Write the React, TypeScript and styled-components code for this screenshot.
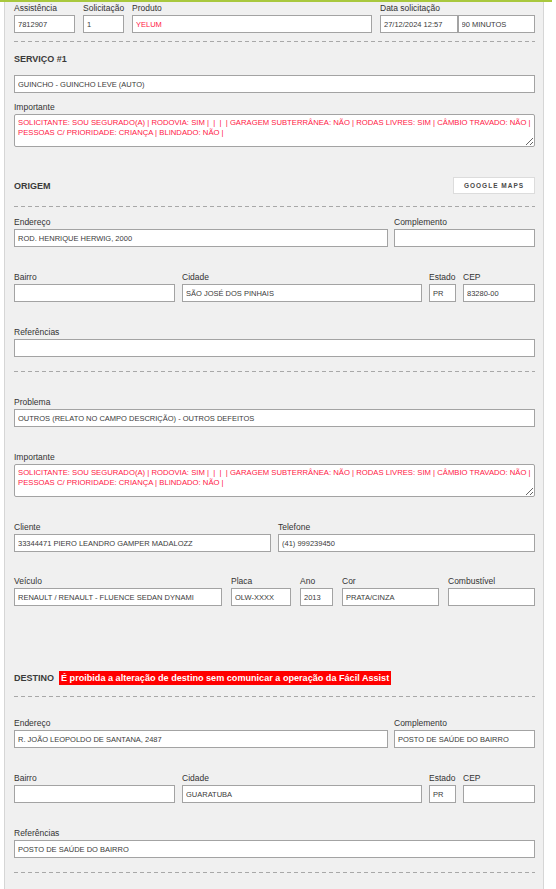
import React from "react";
import styled, {createGlobalStyle} from "styled-components";

const GlobalStyle = createGlobalStyle`
    html, body {
        margin: 0;
        padding: 0;
        background: #ffffff;
        font-family: "Liberation Sans", Arial, sans-serif;
    }
`;

const Page = styled.div`
    width: 552px;
    border-top: 2px solid #a9c83e;
`;

const Panel = styled.div`
    box-sizing: border-box;
    margin-left: 4px;
    width: 540px;
    min-height: 887px;
    padding: 2px 8px 20px 9px;
    background: #f0f0f0;
    border-left: 1px solid #d6d6d6;
    border-right: 1px solid #d6d6d6;
`;

const Row = styled.div<{ $gap?: number; $mt?: number }>`
    display: flex;
    gap: ${(p) => p.$gap ?? 7}px;
    margin-top: ${(p) => p.$mt ?? 0}px;
`;

const Field = styled.div<{ $w?: number }>`
    display: flex;
    flex-direction: column;
    min-width: 0;
    ${(p) => (p.$w ? `width: ${p.$w}px; flex: none;` : "flex: 1;")}
`;

const Label = styled.label`
    display: block;
    height: 11px;
    line-height: 9px;
    font-size: 8.5px;
    color: #333333;
    white-space: nowrap;
`;

const Input = styled.input<{ $red?: boolean }>`
    box-sizing: border-box;
    width: 100%;
    height: 18px;
    margin: 0;
    padding: 0 3px;
    border: 1px solid #a3a3a3;
    border-radius: 0;
    background: #ffffff;
    font-family: "Liberation Sans", Arial, sans-serif;
    font-size: 7.5px;
    color: ${(p) => (p.$red ? "#ff1744" : "#3a3a3a")};
    outline: none;
`;

const Pair = styled.div`
    display: flex;
`;

const Note = styled.textarea`
    box-sizing: border-box;
    display: block;
    width: 100%;
    height: 33px;
    margin: 0;
    padding: 3px 3px;
    border: 1px solid #a3a3a3;
    border-radius: 2px;
    background: #ffffff;
    font-family: "Liberation Sans", Arial, sans-serif;
    font-size: 7.7px;
    line-height: 10px;
    color: #ff1744;
    white-space: pre;
    overflow: hidden;
    resize: both;
    outline: none;
`;

const Divider = styled.div<{ $mt: number }>`
    height: 1px;
    margin-top: ${(p) => p.$mt}px;
    background: repeating-linear-gradient(to right, #a8a8a8 0 4px, transparent 4px 7px);
`;

const SectionHead = styled.div<{ $mt: number }>`
    display: flex;
    align-items: center;
    justify-content: space-between;
    height: 17px;
    margin-top: ${(p) => p.$mt}px;
`;

const TitleGroup = styled.div`
    display: flex;
    align-items: center;
    gap: 5px;
`;

const Title = styled.span`
    font-size: 9px;
    font-weight: bold;
    color: #3a3a3a;
`;

const Warning = styled.span`
    display: inline-block;
    height: 14px;
    line-height: 14px;
    padding: 0 2px;
    background: #ff0000;
    color: #ffffff;
    font-size: 9.1px;
    font-weight: bold;
`;

const MapsButton = styled.button`
    box-sizing: border-box;
    width: 82px;
    height: 17px;
    padding: 0;
    border: 1px solid #dcdcdc;
    background: #ffffff;
    font-family: "Liberation Sans", Arial, sans-serif;
    font-size: 6.5px;
    font-weight: bold;
    letter-spacing: 1px;
    color: #4a4a4a;
    cursor: pointer;
`;

const IMPORTANTE =
    "SOLICITANTE: SOU SEGURADO(A) | RODOVIA: SIM |  |  |  | GARAGEM SUBTERRÂNEA: NÃO | RODAS LIVRES: SIM | CÂMBIO TRAVADO: NÃO |\nPESSOAS C/ PRIORIDADE: CRIANÇA | BLINDADO: NÃO |";

type AddressProps = {
    mt: number;
    endereco: string;
    complemento: string;
    cidade: string;
    cep: string;
    referencias: string;
};

const AddressBlock: React.FC<AddressProps> = ({mt, endereco, complemento, cidade, cep, referencias}) => (
    <>
        <Row $gap={6} $mt={mt}>
            <Field $w={374}>
                <Label>Endereço</Label>
                <Input readOnly value={endereco}/>
            </Field>
            <Field>
                <Label>Complemento</Label>
                <Input readOnly value={complemento}/>
            </Field>
        </Row>
        <Row $gap={7} $mt={26}>
            <Field $w={161}>
                <Label>Bairro</Label>
                <Input readOnly value=""/>
            </Field>
            <Field $w={240}>
                <Label>Cidade</Label>
                <Input readOnly value={cidade}/>
            </Field>
            <Field $w={27}>
                <Label>Estado</Label>
                <Input readOnly value="PR"/>
            </Field>
            <Field>
                <Label>CEP</Label>
                <Input readOnly value={cep}/>
            </Field>
        </Row>
        <Row $mt={26}>
            <Field>
                <Label>Referências</Label>
                <Input readOnly value={referencias}/>
            </Field>
        </Row>
    </>
);

const App: React.FC = () => {
    return (
        <>
            <GlobalStyle/>
            <Page>
                <Panel>
                    <Row $gap={8}>
                        <Field $w={61}>
                            <Label>Assistência</Label>
                            <Input readOnly value="7812907"/>
                        </Field>
                        <Field $w={41}>
                            <Label>Solicitação</Label>
                            <Input readOnly value="1"/>
                        </Field>
                        <Field $w={240}>
                            <Label>Produto</Label>
                            <Input readOnly $red value="YELUM"/>
                        </Field>
                        <Field>
                            <Label>Data solicitação</Label>
                            <Pair>
                                <Input readOnly value="27/12/2024 12:57"/>
                                <Input readOnly value="90 MINUTOS"/>
                            </Pair>
                        </Field>
                    </Row>

                    <Divider $mt={8}/>

                    <SectionHead $mt={8}>
                        <Title>SERVIÇO #1</Title>
                    </SectionHead>
                    <Row $mt={8}>
                        <Field>
                            <Input readOnly value="GUINCHO - GUINCHO LEVE (AUTO)"/>
                        </Field>
                    </Row>
                    <Row $mt={10}>
                        <Field>
                            <Label>Importante</Label>
                            <Note readOnly defaultValue={IMPORTANTE}/>
                        </Field>
                    </Row>

                    <SectionHead $mt={30}>
                        <Title>ORIGEM</Title>
                        <MapsButton>GOOGLE MAPS</MapsButton>
                    </SectionHead>
                    <Divider $mt={12}/>

                    <AddressBlock mt={11}
                                  endereco="ROD. HENRIQUE HERWIG, 2000"
                                  complemento=""
                                  cidade="SÃO JOSÉ DOS PINHAIS"
                                  cep="83280-00"
                                  referencias=""/>

                    <Divider $mt={14}/>

                    <Row $mt={26}>
                        <Field>
                            <Label>Problema</Label>
                            <Input readOnly value="OUTROS (RELATO NO CAMPO DESCRIÇÃO) - OUTROS DEFEITOS"/>
                        </Field>
                    </Row>
                    <Row $mt={26}>
                        <Field>
                            <Label>Importante</Label>
                            <Note readOnly defaultValue={IMPORTANTE}/>
                        </Field>
                    </Row>
                    <Row $gap={7} $mt={26}>
                        <Field>
                            <Label>Cliente</Label>
                            <Input readOnly value="33344471 PIERO LEANDRO GAMPER MADALOZZ"/>
                        </Field>
                        <Field>
                            <Label>Telefone</Label>
                            <Input readOnly value="(41) 999239450"/>
                        </Field>
                    </Row>
                    <Row $gap={9} $mt={25}>
                        <Field $w={208}>
                            <Label>Veículo</Label>
                            <Input readOnly value="RENAULT / RENAULT - FLUENCE SEDAN DYNAMI"/>
                        </Field>
                        <Field $w={60}>
                            <Label>Placa</Label>
                            <Input readOnly value="OLW-XXXX"/>
                        </Field>
                        <Field $w={33}>
                            <Label>Ano</Label>
                            <Input readOnly value="2013"/>
                        </Field>
                        <Field $w={97}>
                            <Label>Cor</Label>
                            <Input readOnly value="PRATA/CINZA"/>
                        </Field>
                        <Field>
                            <Label>Combustível</Label>
                            <Input readOnly value=""/>
                        </Field>
                    </Row>

                    <SectionHead $mt={63}>
                        <TitleGroup>
                            <Title>DESTINO</Title>
                            <Warning>É proibida a alteração de destino sem comunicar a operação da Fácil Assist</Warning>
                        </TitleGroup>
                    </SectionHead>
                    <Divider $mt={10}/>

                    <AddressBlock mt={22}
                                  endereco="R. JOÃO LEOPOLDO DE SANTANA, 2487"
                                  complemento="POSTO DE SAÚDE DO BAIRRO"
                                  cidade="GUARATUBA"
                                  cep=""
                                  referencias="POSTO DE SAÚDE DO BAIRRO"/>

                    <Divider $mt={14}/>
                </Panel>
            </Page>
        </>
    );
};

export default App;
